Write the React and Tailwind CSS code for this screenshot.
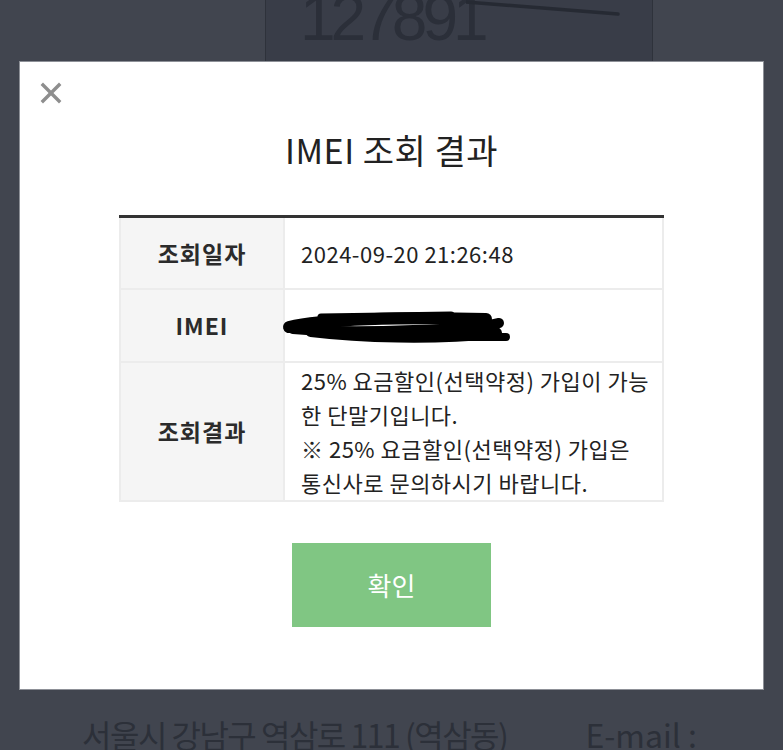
import React from 'react';

const KR = { fontFamily: '"Noto Sans CJK KR", "Noto Sans", sans-serif' };

function CloseIcon() {
  return (
    <svg width="22" height="22" viewBox="0 0 22 22" fill="none" stroke="#8e8e8e" strokeWidth="3.4" strokeLinecap="square">
      <path d="M3 3L19 19" />
      <path d="M19 3L3 19" />
    </svg>
  );
}

function Scribble() {
  return (
    <svg width="232" height="36" viewBox="0 0 232 36" fill="none" stroke="#000" strokeLinecap="round" strokeLinejoin="round">
      <path d="M8 18 C 40 10, 120 8, 205 10" strokeWidth="12" />
      <path d="M30 22 C 80 28, 150 30, 215 24" strokeWidth="12" />
      <path d="M12 20 C 60 24, 130 22, 200 18 L 218 14" strokeWidth="10" />
      <path d="M150 28 L 225 28" strokeWidth="8" />
      <path d="M40 8 L 170 6" strokeWidth="7" />
    </svg>
  );
}

function Row({ label, children, h }) {
  return (
    <tr style={{ height: h }}>
      <th className="w-[164px] bg-[#f5f5f5] border-2 border-[#ececec] text-[23px] tracking-[1px] font-bold text-[#2b2b2b] text-center align-middle">
        {label}
      </th>
      <td className="border-2 border-[#ececec] pl-[16px] pr-2 text-[22px] tracking-[0.5px] text-[#222] align-middle leading-[34px] whitespace-nowrap">
        {children}
      </td>
    </tr>
  );
}

export default function App() {
  return (
    <div className="w-[783px] h-[750px] bg-[#41454f] overflow-hidden flex flex-col" style={KR}>
      <div className="h-[61px] shrink-0 pl-[265px]">
        <div className="relative w-[388px] h-full bg-[#393d48] border-x border-[#2e323b] overflow-hidden">
          <span
            className="absolute left-[34px] top-[-14px] text-[64px] leading-none text-[#2b2f39] tracking-[-5px]"
            style={{ fontFamily: '"Liberation Sans", sans-serif' }}
          >
            127891
          </span>
          <svg className="absolute left-[200px] top-[0px]" width="170" height="20" viewBox="0 0 170 20">
            <path d="M0 2 L 152 14" stroke="#262a33" strokeWidth="3.5" strokeLinecap="round" />
          </svg>
        </div>
      </div>

      <div className="relative mx-[19px] h-[629px] shrink-0 bg-white border border-[#8d9097] flex flex-col items-center">
        <button className="absolute left-[20px] top-[20px]">
          <CloseIcon />
        </button>
        <h2 className="mt-[68px] text-[34px] leading-[40px] font-normal text-[#222] tracking-[0.5px]">IMEI 조회 결과</h2>

        <table className="mt-[45px] w-[545px] border-collapse border-t-[3px] border-t-[#333]">
          <tbody>
            <Row label="조회일자" h={72}>2024-09-20 21:26:48</Row>
            <Row label="IMEI" h={73}>
              <div className="-ml-[20px] mt-[4px]">
                <Scribble />
              </div>
            </Row>
            <Row label="조회결과" h={139}>
              25% 요금할인(선택약정) 가입이 가능
              <br />한 단말기입니다.
              <br />※ 25% 요금할인(선택약정) 가입은
              <br />통신사로 문의하시기 바랍니다.
            </Row>
          </tbody>
        </table>

        <button className="mt-[41px] w-[199px] h-[84px] bg-[#80c683] text-white text-[26px] font-normal">
          확인
        </button>
      </div>

      <div className="mt-[24px] pl-[82px] flex items-start gap-[78px] text-[32px] leading-[40px] text-[#2c3039] whitespace-nowrap">
        <span className="tracking-[-1.5px]">서울시 강남구 역삼로 111 (역삼동)</span>
        <span>E-mail :</span>
      </div>
    </div>
  );
}
